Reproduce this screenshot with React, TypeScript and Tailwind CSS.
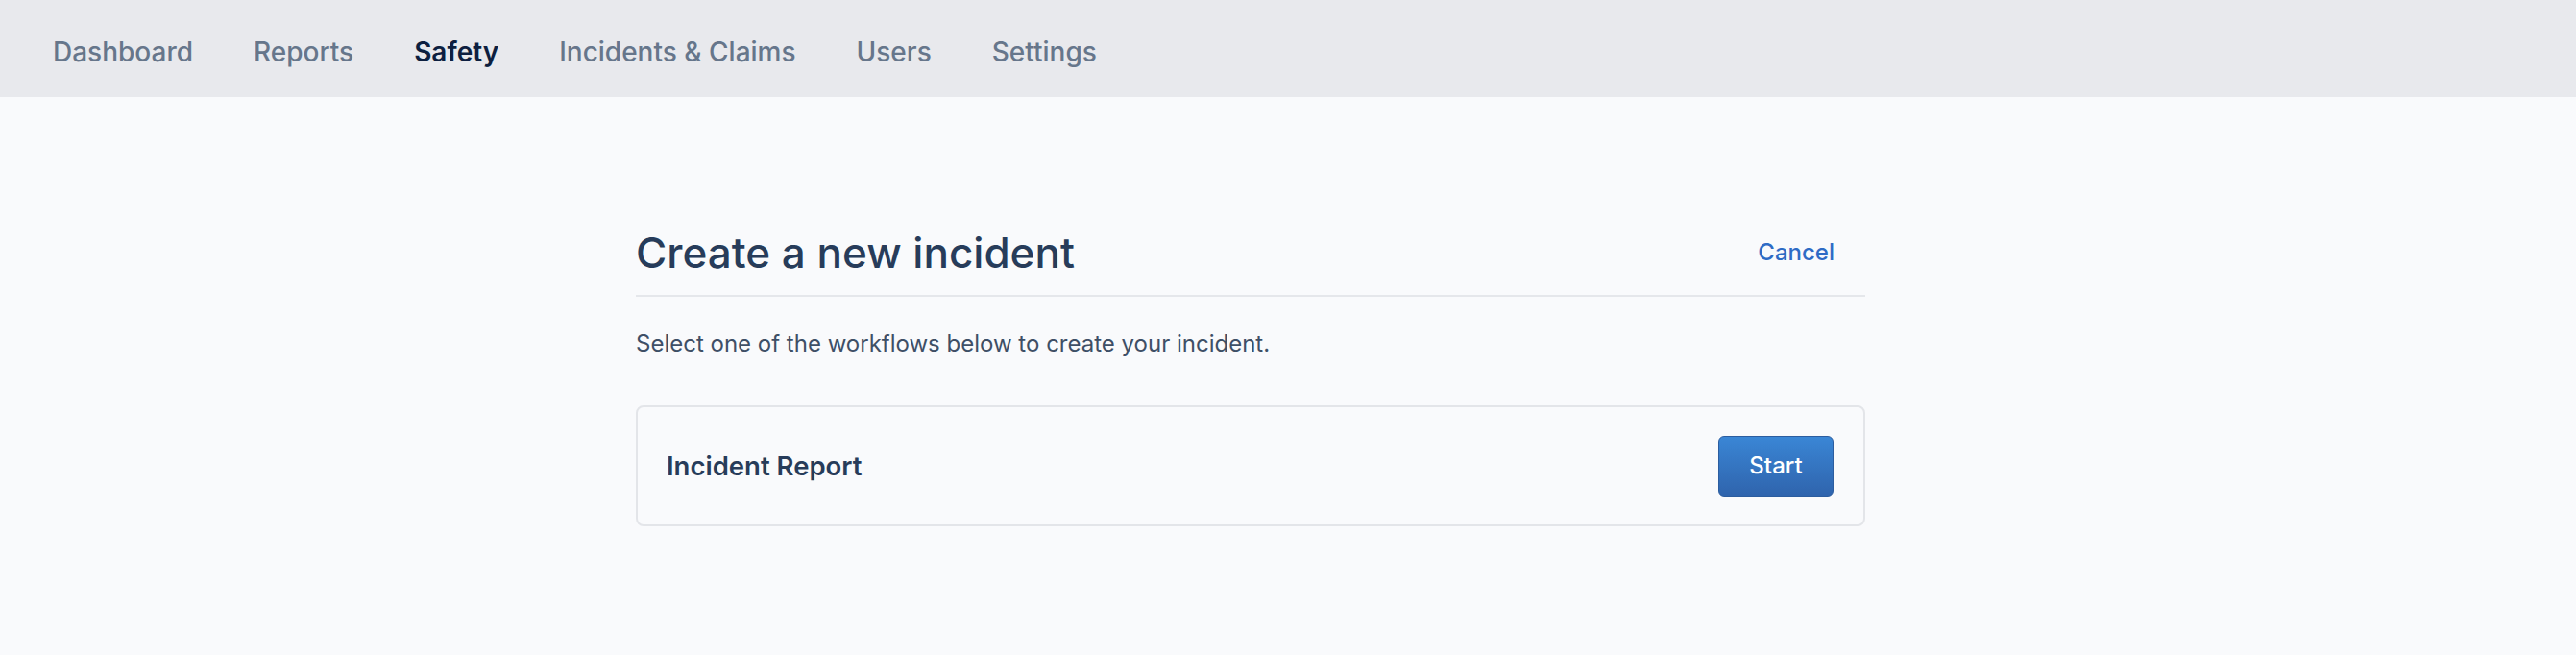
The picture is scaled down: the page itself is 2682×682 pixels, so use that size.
const tabs = ["Dashboard", "Reports", "Safety", "Incidents & Claims", "Users", "Settings"];

const workflows = [{ id: "incident-report", name: "Incident Report" }];

function TopNav({ active }: { active: string }) {
  return (
    <nav className="flex h-[101px] items-center gap-[63px] bg-[#e8e9ed] pl-[55px] pt-[7px]">
      {tabs.map((tab) => (
        <a
          key={tab}
          href="#"
          className={
            tab === active
              ? "text-[28px] leading-[36px] font-semibold text-[#0d1f40]"
              : "text-[28px] leading-[36px] font-medium text-[#66768b]"
          }
        >
          {tab}
        </a>
      ))}
    </nav>
  );
}

function WorkflowCard({ name }: { name: string }) {
  return (
    <div className="flex h-[126px] items-center justify-between rounded-[8px] border-2 border-[#e3e5e9] bg-[#f9fafc] pl-[30px] pr-[31px]">
      <span className="text-[27.5px] leading-[36px] font-semibold text-[#273c5a]">{name}</span>
      <button
        type="button"
        className="h-[63px] w-[120px] rounded-[6px] border border-[#2c5d9f] bg-gradient-to-b from-[#3a86d5] to-[#2f64ad] text-[24px] font-medium text-white"
      >
        Start
      </button>
    </div>
  );
}

export default function App() {
  return (
    <div className="min-h-[682px] bg-[#f9fafc] font-['Inter','Liberation_Sans',sans-serif]">
      <TopNav active="Safety" />
      <main className="ml-[662px] w-[1280px] pt-[137px]">
        <div className="flex items-center justify-between border-b-2 border-[#e5e7eb] pb-[19px]">
          <h1 className="text-[44px] leading-[50px] font-medium text-[#273c5a]">
            Create a new incident
          </h1>
          <a href="#" className="pr-[32px] text-[24px] leading-[32px] font-medium text-[#2e6bc5]">
            Cancel
          </a>
        </div>
        <p className="mt-[33px] text-[24px] leading-[32px] text-[#3e4f66]">
          Select one of the workflows below to create your incident.
        </p>
        <div className="mt-[48px] flex flex-col gap-[16px]">
          {workflows.map((w) => (
            <WorkflowCard key={w.id} name={w.name} />
          ))}
        </div>
      </main>
    </div>
  );
}
